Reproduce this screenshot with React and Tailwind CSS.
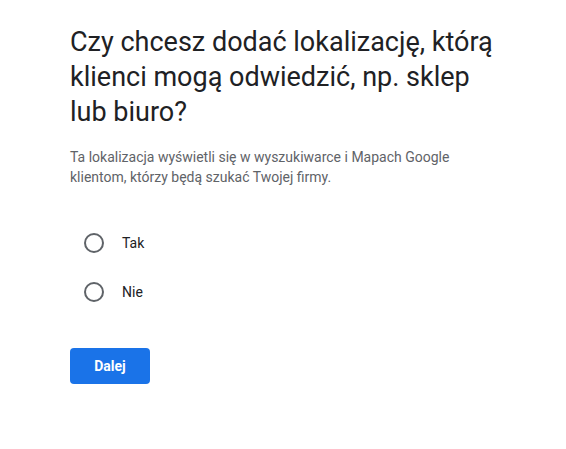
export default function App() {
  return (
    <div className="min-h-[449px] bg-white" style={{ fontFamily: 'Roboto, "Noto Sans", sans-serif' }}>
      <div className="w-[440px] pl-[70px] pt-[25px] box-content">
        <h1 className="text-[27px] leading-[35px] text-[#202124] font-normal">
          Czy chcesz dodać lokalizację, którą klienci mogą odwiedzić, np. sklep lub biuro?
        </h1>
        <p className="mt-[17px] w-[400px] text-[14px] leading-[20px] text-[#5f6368]">
          Ta lokalizacja wyświetli się w wyszukiwarce i Mapach Google klientom, którzy będą szukać Twojej firmy.
        </p>
        <div className="mt-[46px] flex flex-col gap-[29px]">
          {['Tak', 'Nie'].map((label) => (
            <label key={label} className="flex items-center gap-[18px] pl-[14px] cursor-pointer">
              <span className="w-[20px] h-[20px] rounded-full border-2 border-[#5f6368]" />
              <span className="text-[14px] leading-[20px] text-[#202124]">{label}</span>
            </label>
          ))}
        </div>
        <button className="block mt-[46px] w-[80px] h-[36px] rounded-[4px] bg-[#1a73e8] text-white text-[14px] font-bold">
          Dalej
        </button>
      </div>
    </div>
  );
}
